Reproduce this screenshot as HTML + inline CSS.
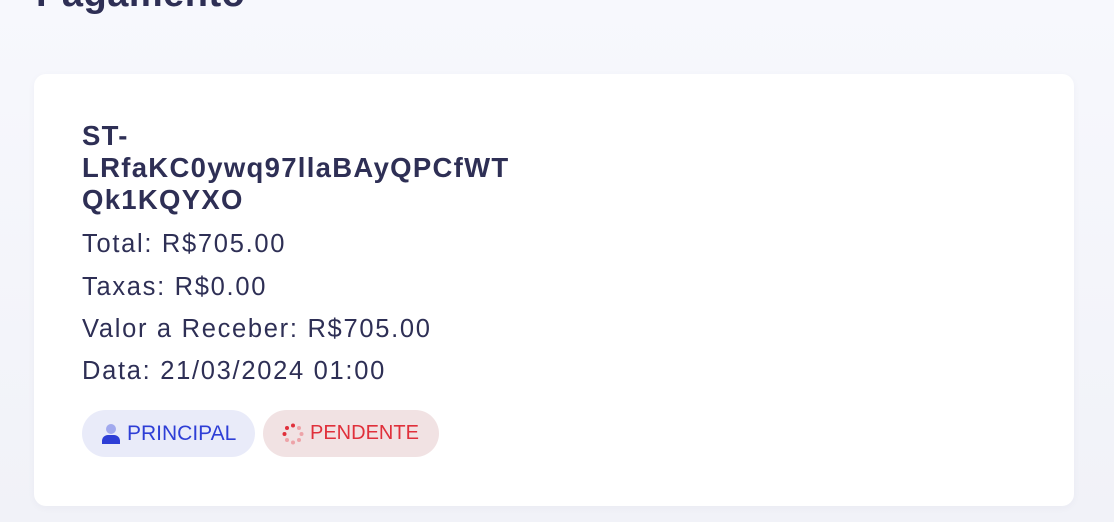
<!DOCTYPE html>
<html><head><style>
body{margin:0;width:1114px;height:522px;overflow:hidden;background:linear-gradient(#f7f8fd,#f1f2f8);font-family:"Liberation Sans",sans-serif;color:#2e2f55;position:relative}
h1{position:absolute;left:36px;top:-27px;margin:0;font-size:38px;font-weight:bold;color:#2e2f55;letter-spacing:0.5px}
.card{position:absolute;left:34px;top:74px;width:1040px;height:432px;background:#fff;border-radius:12px;box-shadow:0 2px 8px rgba(40,40,90,.04)}
.id{position:absolute;left:48px;top:46px;font-size:27.5px;font-weight:bold;line-height:32px;letter-spacing:1.3px}
.l{position:absolute;left:48px;font-size:25.5px;line-height:30px;letter-spacing:1.7px}
.b{position:absolute;top:336px;height:47px;border-radius:24px;display:flex;align-items:center;font-size:21px}
</style></head><body>
<h1>Pagamento</h1>
<div class="card">
<div class="id">ST-<br>LRfaKC0ywq97llaBAyQPCfWT<br>Qk1KQYXO</div>
<div class="l" style="top:155px">Total: R$705.00</div>
<div class="l" style="top:198px">Taxas: R$0.00</div>
<div class="l" style="top:240px">Valor a Receber: R$705.00</div>
<div class="l" style="top:282px">Data: 21/03/2024 01:00</div>
<div class="b" style="left:48px;width:173px;background:#e9ebf9;color:#2e3ed6">
<svg width="20" height="22" viewBox="0 0 20 22" style="margin-left:19px;margin-right:6px"><circle cx="10" cy="6" r="5" fill="#a1a9ee"/><path d="M1 21v-3a6 6 0 0 1 6-6h6a6 6 0 0 1 6 6v3z" fill="#2e3ed6"/></svg>PRINCIPAL</div>
<div class="b" style="left:229px;width:176px;background:#f1e2e3;color:#e0303b;font-size:20px">
<svg width="22" height="22" viewBox="0 0 22 22" style="margin-left:19px;margin-right:6px"><g fill="#e0303b"><circle cx="11" cy="2.5" r="2"/><circle cx="5" cy="5" r="2"/><circle cx="2.5" cy="11" r="2"/></g><g fill="#eda3a8"><circle cx="17" cy="5" r="2"/><circle cx="19.5" cy="11" r="2"/><circle cx="17" cy="17" r="2"/><circle cx="11" cy="19.5" r="2"/><circle cx="5" cy="17" r="2"/></g></svg>PENDENTE</div>
</div>
</body></html>
